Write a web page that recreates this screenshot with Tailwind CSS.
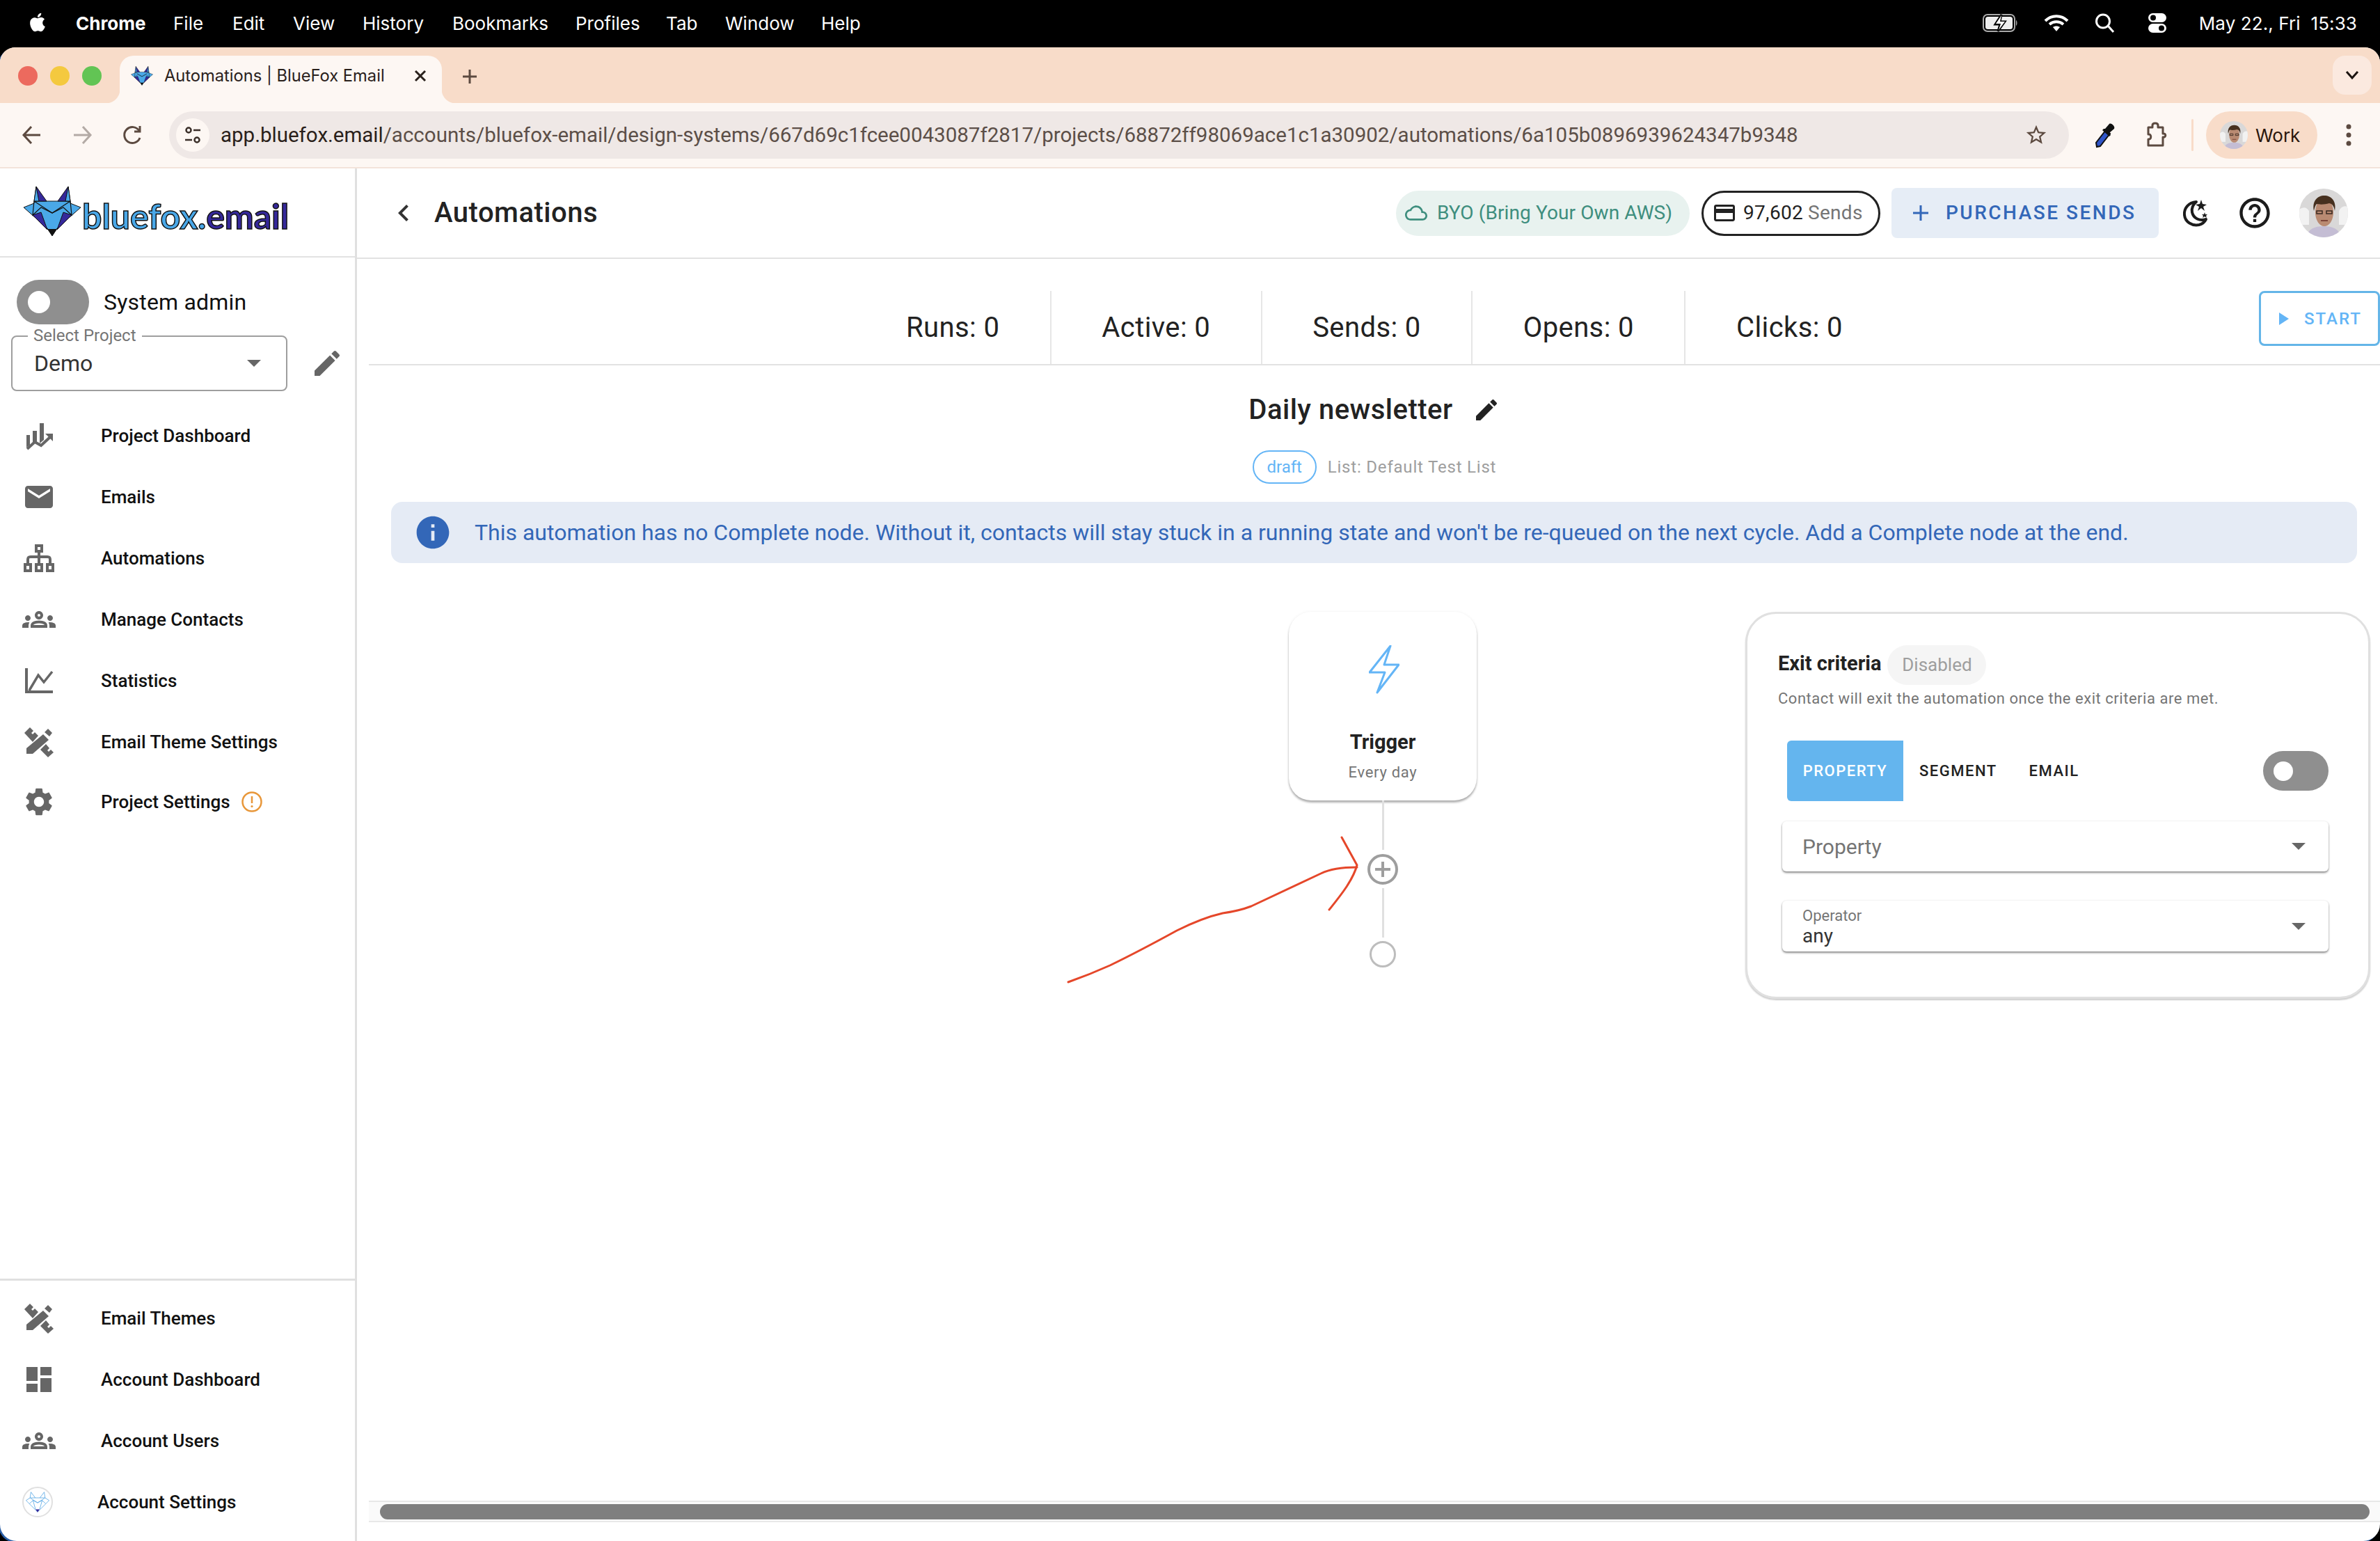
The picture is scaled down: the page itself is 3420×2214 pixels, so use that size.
<!DOCTYPE html>
<html lang="en">
<head>
  <meta charset="UTF-8" />
  <title>Automations | BlueFox Email</title>
  <script src="https://cdn.jsdelivr.net/npm/@tailwindcss/browser@4"></script>
</head>
<body class="w-[3420px] h-[2214px] overflow-hidden bg-black flex flex-col font-[Roboto,sans-serif]">

  <!-- shared fox logo -->
  <svg class="hidden">
    <symbol id="fox" viewBox="-1 -1 84 73">
      <polygon points="0,30 15,24 15,21 67,21 67,24 82,30 48,60 41,71 34,60" fill="#4aa8e8" stroke="#111" stroke-width="1"/>
      <polygon points="18,0 15,21 33,21" fill="#35289a" stroke="#111" stroke-width="1"/>
      <polygon points="18,0 15,21 22,21" fill="#4aa8e8" stroke="#111" stroke-width="1"/>
      <polygon points="64,0 67,21 49,21" fill="#35289a" stroke="#111" stroke-width="1"/>
      <polygon points="64,0 67,21 60,21" fill="#4aa8e8" stroke="#111" stroke-width="1"/>
      <polygon points="13,41 25,37 34,62" fill="#35289a" stroke="#111" stroke-width="1"/>
      <polygon points="69,41 57,37 48,62" fill="#35289a" stroke="#111" stroke-width="1"/>
      <polyline points="15,21 41,38 67,21" fill="none" stroke="#111" stroke-width="1.2"/>
      <polyline points="15,21 13,41 25,30 41,38 57,30 69,41 67,21" fill="none" stroke="#111" stroke-width="1.2"/>
      <polygon points="34,61 48,61 41,71" fill="#111"/>
    </symbol>
    <symbol id="design" viewBox="0 0 48 48">
      <polygon points="6,41 6,33 30,13 38,21 15,41"/>
      <polygon points="32,10 37,5 43,11 39,16"/>
      <polygon points="3,11 11,3 16,8 13,11 15,13 18,10 23,15 15,24"/>
      <polygon points="26,35 34,27 39,33 36,36 38,38 41,35 45,39 37,46"/>
    </symbol>
    <symbol id="groups" viewBox="0 0 24 24"><path d="M4,13c1.1,0,2-0.9,2-2c0-1.1-0.9-2-2-2s-2,0.9-2,2C2,12.1,2.9,13,4,13z M5.13,14.1C4.76,14.04,4.39,14,4,14 c-0.99,0-1.93,0.21-2.78,0.58C0.48,14.9,0,15.62,0,16.43V18l4.5,0v-1.61C4.5,15.56,4.73,14.78,5.13,14.1z M20,13c1.1,0,2-0.9,2-2 c0-1.1-0.9-2-2-2s-2,0.9-2,2C18,12.1,18.9,13,20,13z M24,16.43c0-0.81-0.48-1.53-1.22-1.85C21.93,14.21,20.99,14,20,14 c-0.39,0-0.76,0.04-1.13,0.1c0.4,0.68,0.63,1.46,0.63,2.29V18l4.5,0V16.43z M16.24,13.65c-1.17-0.52-2.61-0.9-4.24-0.9 c-1.63,0-3.07,0.39-4.24,0.9C6.68,14.13,6,15.21,6,16.39V18h12v-1.61C18,15.21,17.32,14.13,16.24,13.65z M8.07,16 c0.09-0.23,0.13-0.39,0.91-0.69c0.97-0.38,1.99-0.56,3.02-0.56s2.05,0.18,3.02,0.56c0.77,0.3,0.81,0.46,0.91,0.69H8.07z M12,8 c0.55,0,1,0.45,1,1s-0.45,1-1,1s-1-0.45-1-1S11.45,8,12,8 M12,6c-1.66,0-3,1.34-3,3c0,1.66,1.34,3,3,3s3-1.34,3-3 C15,7.34,13.66,6,12,6L12,6z"/></symbol>
    <symbol id="face" viewBox="0 0 70 70">
      <rect width="70" height="70" fill="#d9d8d8"/>
      <path d="M0 30c6-4 10-4 14 2v20H0zM70 26c-6-2-10 0-13 6v20h13z" fill="#f2f2f2"/>
      <path d="M10 70c2-12 12-16 25-16s23 4 25 16z" fill="#c4bdd4"/>
      <ellipse cx="36" cy="34" rx="13" ry="20" fill="#b98a72"/>
      <path d="M21 32c-3-14 5-22 15-22s18 8 15 22c-1-6-3-10-8-11-6 2-14 2-18 1-2 2-3 6-4 10z" fill="#46301f"/>
      <path d="M25 32h8v4h-8zM39 32h8v4h-8z" fill="none" stroke="#3a2a22" stroke-width="1.500"/>
      <path d="M31 46h10" stroke="#7c4438" stroke-width="2"/>
    </symbol>
  </svg>

  <!-- macOS menu bar -->
  <div class="h-[68px] shrink-0 flex items-center text-white text-[26px] font-[Inter,sans-serif] pb-[2px] relative">
    <svg class="w-[32px] h-[32px] ml-[38px] -mt-[2px]" viewBox="0 0 24 24" fill="#fff"><path d="M18.71 19.5c-.83 1.24-1.71 2.45-3.05 2.47-1.34.03-1.77-.79-3.29-.79-1.53 0-2 .77-3.27.82-1.31.05-2.3-1.32-3.14-2.53C4.25 17 2.94 12.45 4.7 9.39c.87-1.52 2.43-2.48 4.12-2.51 1.28-.02 2.5.87 3.29.87.78 0 2.26-1.07 3.81-.91.65.03 2.47.26 3.64 1.98-.09.06-2.17 1.28-2.15 3.81.03 3.02 2.65 4.03 2.68 4.04-.03.07-.42 1.44-1.38 2.83M13 3.5c.73-.83 1.94-1.46 2.94-1.5.13 1.17-.34 2.35-1.04 3.19-.69.85-1.83 1.51-2.95 1.42-.15-1.15.41-2.35 1.05-3.11z"/></svg>
    <span class="ml-[39px] w-[140px] font-bold">Chrome</span>
    <span class="w-[85px]">File</span>
    <span class="w-[87px]">Edit</span>
    <span class="w-[100px]">View</span>
    <span class="w-[129px]">History</span>
    <span class="w-[177px]">Bookmarks</span>
    <span class="w-[130px]">Profiles</span>
    <span class="w-[85px]">Tab</span>
    <span class="w-[138px]">Window</span>
    <span>Help</span>
    <div class="ml-auto flex items-center pr-[33px]">
      <svg class="w-[52px] h-[26px]" viewBox="0 0 52 26"><rect x="1" y="1" width="45" height="24" rx="6" fill="none" stroke="#aaa" stroke-width="2"/><rect x="4" y="4" width="39" height="18" rx="3.5" fill="#eee"/><path d="M48 9c2 1 2 7 0 8z" fill="#aaa"/><path d="M27 1l-9 14h7l-3 10 10-14h-7z" fill="#000" stroke="#000" stroke-width="3"/><path d="M27 2l-8 12h7l-3 9 9-12h-7z" fill="#fff"/></svg>
      <svg class="w-[36px] h-[26px] ml-[36px]" viewBox="0 0 36 26" fill="none" stroke="#fff" stroke-width="4"><path d="M2 10c9-9 23-9 32 0"/><path d="M8 15c6-5 14-5 20 0"/><path d="M18 25l-5-6c3-2 7-2 10 0z" fill="#fff" stroke="none"/></svg>
      <svg class="w-[30px] h-[28px] ml-[37px]" viewBox="0 0 30 28" fill="none" stroke="#fff" stroke-width="3"><circle cx="12" cy="11.500" r="9.500"/><path d="M19 18l8 9"/></svg>
      <svg class="w-[28px] h-[28px] ml-[46px]" viewBox="0 0 28 28"><rect x="1" y="0" width="26" height="13" rx="6.500" fill="#fff"/><circle cx="8" cy="6.500" r="4" fill="#000"/><rect x="1" y="15" width="26" height="13" rx="6.500" fill="#fff"/><circle cx="20" cy="21.500" r="4" fill="#000"/></svg>
      <span class="ml-[46px] tracking-[0.1px]">May 22., Fri&nbsp;&nbsp;15:33</span>
    </div>
  </div>

  <!-- browser window -->
  <div class="flex-1 min-h-0 flex flex-col rounded-t-[22px] rounded-b-[24px] overflow-hidden bg-white shadow-[-2px_2px_0_#2a5fa8]">

    <!-- tab strip -->
    <div class="h-[80px] shrink-0 bg-[#f8dcc9] flex items-end relative">
      <div class="flex gap-[18px] self-start mt-[27px] ml-[26px] mr-[26px]">
        <span class="w-[28px] h-[28px] rounded-full bg-[#ec6a5e]"></span>
        <span class="w-[28px] h-[28px] rounded-full bg-[#f4c93f]"></span>
        <span class="w-[28px] h-[28px] rounded-full bg-[#62c454]"></span>
      </div>
      <div class="w-[463px] h-[68px] bg-[#fdf7f3] rounded-t-[20px] flex items-center pl-[16px] pb-[10px] relative">
        <svg class="w-[32px] h-[30px]"><use href="#fox"/></svg>
        <span class="ml-[16px] text-[23.7px] text-[#2a211c] font-[Inter,sans-serif] whitespace-nowrap">Automations | BlueFox Email</span>
        <svg class="absolute left-[422px] top-[19px] w-[20px] h-[20px]" viewBox="0 0 20 20" stroke="#2a211c" stroke-width="3"><path d="M3 3l14 14M17 3L3 17"/></svg>
        <span class="absolute -left-[20px] bottom-0 w-[20px] h-[20px] bg-[radial-gradient(circle_at_0_0,#f8dcc9_20px,#fdf7f3_21px)]"></span>
        <span class="absolute -right-[20px] bottom-0 w-[20px] h-[20px] bg-[radial-gradient(circle_at_100%_0,#f8dcc9_20px,#fdf7f3_21px)]"></span>
      </div>
      <svg class="w-[24px] h-[24px] ml-[28px] self-center mt-[4px]" viewBox="0 0 24 24" stroke="#5c4a40" stroke-width="3"><path d="M12 2v20M2 12h20"/></svg>
      <div class="ml-auto mr-[12px] self-start mt-[12px] w-[56px] h-[56px] rounded-[18px] bg-[#fbe9df] flex items-center justify-center">
        <svg class="w-[20px] h-[14px]" viewBox="0 0 20 14" fill="none" stroke="#1c1410" stroke-width="3"><path d="M2 2l8 9 8-9"/></svg>
      </div>
    </div>

    <!-- toolbar -->
    <div class="h-[94px] shrink-0 bg-[#fdf7f3] border-b-2 border-[#f3e3da] flex items-center">
      <svg class="w-[32px] h-[32px] ml-[30px]" viewBox="0 0 32 32" fill="none" stroke="#5c4a40" stroke-width="3"><path d="M28 16H5M15 4L4 16l11 12"/></svg>
      <svg class="w-[32px] h-[32px] ml-[40px]" viewBox="0 0 32 32" fill="none" stroke="#b3aaa5" stroke-width="3"><path d="M4 16h23M17 4l11 12-11 12"/></svg>
      <svg class="w-[32px] h-[32px] ml-[41px]" viewBox="0 0 32 32" fill="none" stroke="#5c4a40" stroke-width="3"><path d="M26 20a11.500 11.500 0 1 1-1-10"/><path d="M26 3v8h-8"/></svg>
      <div class="ml-[36px] flex-1 h-[68px] rounded-full bg-[#efe8e6] flex items-center">
        <span class="ml-[10px] w-[48px] h-[48px] rounded-full bg-[#fdf7f3] flex items-center justify-center">
          <svg class="w-[26px] h-[26px]" viewBox="0 0 26 26" fill="none" stroke="#3a2e28" stroke-width="2.500"><circle cx="7" cy="6" r="3.500"/><path d="M14 6h10M2 20h10"/><circle cx="19" cy="20" r="3.500"/></svg>
        </span>
        <span class="ml-[16px] text-[29.5px] text-[#5c4f48] font-[&quot;Liberation_Sans&quot;,sans-serif] whitespace-nowrap"><span class="text-[#2a1f1a]">app.bluefox.email</span>/accounts/bluefox-email/design-systems/667d69c1fcee0043087f2817/projects/68872ff98069ace1c1a30902/automations/6a105b0896939624347b9348</span>
        <svg class="ml-auto mr-[30px] w-[34px] h-[34px]" viewBox="0 0 24 24" fill="#5c4a40"><path d="M22 9.240l-7.190-.62L12 2 9.190 8.630 2 9.240l5.460 4.730L5.820 21 12 17.270 18.180 21l-1.630-7.030L22 9.240zM12 15.400l-3.760 2.270 1-4.280-3.320-2.880 4.380-.38L12 6.100l1.710 4.040 4.380.38-3.320 2.880 1 4.280L12 15.400z"/></svg>
      </div>
      <svg class="ml-[36px] w-[34px] h-[38px]" viewBox="0 0 34 38"><path d="M4 36l-1-6L17 12l6 5L9 35z" fill="#2f55c8" stroke="#111" stroke-width="2"/><path d="M16 10l6-7c3-2 9 4 7 7l-7 6 2 3-2 2-10-9 2-2z" fill="#111"/></svg>
      <svg class="ml-[38px] w-[34px] h-[38px]" viewBox="0 0 34 38" fill="none" stroke="#5c4a40" stroke-width="3"><path d="M6 8h6V5c0-4 8-4 8 0v3h7v9c5-1 5 6 0 5v12H6v-9c5 1 5-8 0-7z" stroke-linejoin="round"/></svg>
      <span class="ml-[34px] w-[3px] h-[46px] bg-[#f8dcc9] rounded"></span>
      <div class="ml-[18px] w-[160px] h-[68px] rounded-full bg-[#f8dcc9] flex items-center pl-[20px]">
        <svg class="w-[40px] h-[40px] rounded-full"><use href="#face"/></svg>
        <span class="ml-[11px] text-[26px] text-[#2a160c] font-[Inter,sans-serif]">Work</span>
      </div>
      <svg class="ml-[41px] mr-[41px] w-[8px] h-[32px]" viewBox="0 0 8 32" fill="#5c4a40"><circle cx="4" cy="4" r="3.500"/><circle cx="4" cy="16" r="3.500"/><circle cx="4" cy="28" r="3.500"/></svg>
    </div>

    <!-- app -->
    <div class="flex-1 min-h-0 flex">

      <!-- sidebar -->
      <aside class="w-[513px] shrink-0 border-r-[3px] border-[#e0e0e0] flex flex-col text-[#111]">
        <div class="h-[128px] shrink-0 border-b-2 border-[#e2e2e2] flex items-center pl-[33px] pb-[4px]">
          <svg class="w-[84px] h-[73px]"><use href="#fox"/></svg>
          <span class="ml-[1px] mt-[14px] text-[50px] leading-none font-bold font-[Lato,sans-serif] text-[#4aa8e8] [-webkit-text-stroke:1.5px_#111] whitespace-nowrap">bluefox.<span class="text-[#35289a]">email</span></span>
        </div>

        <div class="flex items-center ml-[24px] mt-[32px]">
          <span class="w-[104px] h-[64px] rounded-full bg-[#8f8f8f] flex items-center pl-[16px]"><span class="w-[32px] h-[32px] rounded-full bg-white"></span></span>
          <span class="ml-[21px] text-[32px] leading-none tracking-[0.2px]">System admin</span>
        </div>

        <div class="flex items-center ml-[16px] mt-[16px]">
          <div class="relative w-[397px] h-[80px] border-2 border-[#9e9e9e] rounded-[8px] flex items-center pl-[31px] pr-[36px]">
            <span class="absolute left-[22px] -top-[16px] px-[8px] bg-white text-[24px] leading-[28px] text-[#757575]">Select Project</span>
            <span class="text-[32px] text-[#333]">Demo</span>
            <span class="ml-auto w-0 h-0 border-x-[10px] border-x-transparent border-t-[10px] border-t-[#666]"></span>
          </div>
          <svg class="ml-[33px] w-[48px] h-[48px]" viewBox="0 0 24 24" fill="#666"><path d="M3 17.250V21h3.750L17.810 9.940l-3.750-3.750L3 17.250zM20.710 7.040c.39-.39.39-1.020 0-1.410l-2.340-2.340c-.39-.39-1.020-.39-1.410 0l-1.830 1.830 3.750 3.750 1.830-1.830z"/></svg>
        </div>

        <nav class="mt-[20px] text-[26px] font-medium">
          <a class="h-[88px] flex items-center pl-[32px] gap-[65px]">
            <svg class="w-[48px] h-[48px]" viewBox="0 0 48 48" fill="#666"><path d="M6 23h5v14l-5 4zM15 17h6v17l-6 0zM25 6h6v24l-6 5z"/><path d="M7 43l11-10 9 5 13-12" fill="none" stroke="#666" stroke-width="4"/><path d="M33 21h11v11z"/></svg>
            Project Dashboard</a>
          <a class="h-[88px] flex items-center pl-[32px] gap-[65px]">
            <svg class="w-[48px] h-[48px]" viewBox="0 0 24 24" fill="#666"><path d="M20 4H4c-1.100 0-1.990.9-1.990 2L2 18c0 1.100.9 2 2 2h16c1.100 0 2-.9 2-2V6c0-1.100-.9-2-2-2zm0 4l-8 5-8-5V6l8 5 8-5v2z"/></svg>
            Emails</a>
          <a class="h-[88px] flex items-center pl-[32px] gap-[65px]">
            <svg class="w-[48px] h-[48px]" viewBox="0 0 48 48" fill="none" stroke="#666" stroke-width="4"><rect x="20" y="6" width="8" height="8"/><rect x="4" y="33" width="8" height="9"/><rect x="20" y="33" width="8" height="9"/><rect x="36" y="33" width="8" height="9"/><path d="M24 16v15M8 31v-5c0-3 1-4 4-4h24c3 0 4 1 4 4v5"/></svg>
            Automations</a>
          <a class="h-[88px] flex items-center pl-[32px] gap-[65px]">
            <svg class="w-[48px] h-[48px]" fill="#666"><use href="#groups"/></svg>
            Manage Contacts</a>
          <a class="h-[88px] flex items-center pl-[32px] gap-[65px]">
            <svg class="w-[48px] h-[48px]" viewBox="0 0 48 48" fill="none" stroke="#666" stroke-width="4"><path d="M6 6v34h38"/><path d="M10 38l13-22 8 10 12-15" stroke-width="3.500"/></svg>
            Statistics</a>
          <a class="h-[88px] flex items-center pl-[32px] gap-[65px]">
            <svg class="w-[48px] h-[48px]" fill="#666"><use href="#design"/></svg>
            Email Theme Settings</a>
          <a class="h-[88px] -mt-[2px] flex items-center pl-[32px] gap-[65px]">
            <svg class="w-[48px] h-[48px]" viewBox="0 0 24 24" fill="#666"><path d="M19.140 12.940c.04-.3.06-.61.06-.94 0-.32-.02-.64-.07-.94l2.030-1.580c.18-.14.23-.41.12-.61l-1.920-3.320c-.12-.22-.37-.29-.59-.22l-2.390.96c-.5-.38-1.030-.7-1.620-.94l-.36-2.540c-.04-.24-.24-.41-.48-.41h-3.840c-.24 0-.43.17-.47.41l-.36 2.540c-.59.24-1.130.57-1.620.94l-2.390-.96c-.22-.08-.47 0-.59.22L2.740 8.870c-.12.21-.08.47.12.61l2.030 1.580c-.05.3-.09.63-.09.94s.02.64.07.94l-2.030 1.580c-.18.14-.23.41-.12.61l1.920 3.320c.12.22.37.29.59.22l2.390-.96c.5.38 1.030.7 1.620.94l.36 2.540c.05.24.24.41.48.41h3.840c.24 0 .44-.17.47-.41l.36-2.540c.59-.24 1.130-.56 1.620-.94l2.390.96c.22.08.47 0 .59-.22l1.920-3.320c.12-.22.07-.47-.12-.61l-2.010-1.580zM12 15.600c-1.980 0-3.600-1.620-3.600-3.600s1.620-3.600 3.600-3.600 3.600 1.620 3.600 3.600-1.620 3.600-3.600 3.600z"/></svg>
            <span class="flex items-center">Project Settings
              <svg class="ml-[16px] w-[30px] h-[30px]" viewBox="0 0 30 30"><circle cx="15" cy="15" r="13.500" fill="none" stroke="#e8973a" stroke-width="2.500"/><path d="M15 7v10" stroke="#e8973a" stroke-width="2.500"/><circle cx="15" cy="21.500" r="1.600" fill="#e8973a"/></svg>
            </span></a>
        </nav>

        <nav class="mt-auto border-t-[3px] border-[#e0e0e0] pt-[10px] pb-[12px] text-[26px] font-medium">
          <a class="h-[88px] flex items-center pl-[32px] gap-[65px]">
            <svg class="w-[48px] h-[48px]" fill="#666"><use href="#design"/></svg>
            Email Themes</a>
          <a class="h-[88px] flex items-center pl-[32px] gap-[65px]">
            <svg class="w-[48px] h-[48px]" viewBox="0 0 24 24" fill="#666"><path d="M3 13h8V3H3v10zm0 8h8v-6H3v6zm10 0h8V11h-8v10zm0-18v6h8V3h-8z"/></svg>
            Account Dashboard</a>
          <a class="h-[88px] flex items-center pl-[32px] gap-[65px]">
            <svg class="w-[48px] h-[48px]" fill="#666"><use href="#groups"/></svg>
            Account Users</a>
          <a class="h-[88px] flex items-center pl-[32px] gap-[64px]">
            <span class="w-[44px] h-[44px] rounded-full border-2 border-[#e0e0e0] flex items-center justify-center">
              <svg class="w-[34px] h-[30px]" viewBox="0 0 82 71" fill="none" stroke="#5aa9e6" stroke-width="2"><path d="M18 1L15 21h52L64 1 49 21M18 1l15 20M15 21L1 30l40 40 40-40-14-9M15 21l26 17 26-17M13 41l12-11 16 8 16-8 12 11M25 30l9 31M57 30l-9 31"/><polygon points="34,61 48,61 41,71" fill="#35289a" stroke="none"/></svg>
            </span>
            Account Settings</a>
        </nav>
      </aside>

      <!-- main -->
      <main class="flex-1 min-w-0 flex flex-col">
        <header class="h-[130px] shrink-0 border-b-2 border-[#e2e2e2] flex items-center pr-[46px]">
          <svg class="ml-[43px] w-[48px] h-[48px]" viewBox="0 0 24 24" fill="#333"><path d="M15.410 7.410 14 6l-6 6 6 6 1.410-1.410L10.830 12z"/></svg>
          <h1 class="ml-[20px] text-[40px] font-medium tracking-[0.5px] text-[#222]">Automations</h1>
          <div class="ml-auto w-[422px] h-[65px] rounded-full bg-[#e8f2ef] flex items-center pl-[13px] text-[28px] tracking-[0.1px] text-[#3e8e7e] whitespace-nowrap">
            <svg class="w-[32px] h-[32px]" viewBox="0 0 24 24" fill="#3e8e7e"><path d="M19.350 10.040C18.670 6.590 15.640 4 12 4 9.110 4 6.600 5.640 5.350 8.040 2.340 8.360 0 10.910 0 14c0 3.310 2.690 6 6 6h13c2.760 0 5-2.240 5-5 0-2.640-2.050-4.780-4.650-4.960zM19 18H6c-2.210 0-4-1.790-4-4s1.790-4 4-4h.71C7.370 7.690 9.480 6 12 6c3.040 0 5.500 2.460 5.500 5.500v.5H19c1.660 0 3 1.340 3 3s-1.340 3-3 3z"/></svg>
            <span class="ml-[14px]">BYO (Bring Your Own AWS)</span>
          </div>
          <div class="ml-[17px] w-[257px] h-[65px] rounded-full border-[3px] border-[#222] flex items-center pl-[12px] text-[28px] tracking-[0.3px] whitespace-nowrap">
            <svg class="w-[36px] h-[36px]" viewBox="0 0 24 24" fill="#222"><path d="M20 4H4c-1.110 0-1.990.89-1.990 2L2 18c0 1.110.89 2 2 2h16c1.110 0 2-.89 2-2V6c0-1.110-.89-2-2-2zm0 14H4v-6h16v6zm0-10H4V6h16v2z"/></svg>
            <span class="ml-[9px] text-[#222]">97,602</span><span class="ml-[7px] text-[#757575]">Sends</span>
          </div>
          <div class="ml-[16px] w-[384px] h-[72px] rounded-[8px] bg-[#e6edf6] flex items-center pl-[30px] text-[28px] font-medium tracking-[2.5px] text-[#3367b8] whitespace-nowrap">
            <svg class="w-[24px] h-[24px]" viewBox="0 0 24 24" stroke="#3367b8" stroke-width="3"><path d="M12 1v22M1 12h22"/></svg>
            <span class="ml-[24px]">PURCHASE SENDS</span>
          </div>
          <svg class="ml-[28px] w-[48px] h-[48px]" viewBox="0 0 48 48"><path d="M26 8C15 9 8 17 9 27c1 10 11 16 21 14 4-1 8-4 10-8-9 3-18-1-20-10-1-6 1-11 6-15z" fill="none" stroke="#1c1c1c" stroke-width="4" stroke-linejoin="round"/><path d="M33 5l2 6 6 1-5 3 2 6-5-4-5 4 2-6-5-3 6-1z" fill="#1c1c1c"/><path d="M38 23l1 3h3l-2 2 1 3-3-2-3 2 1-3-2-2h3z" fill="#1c1c1c"/></svg>
          <svg class="ml-[36px] mr-[38px] w-[52px] h-[52px]" viewBox="0 0 24 24" fill="#1c1c1c"><path d="M11 18h2v-2h-2v2zm1-16C6.480 2 2 6.480 2 12s4.480 10 10 10 10-4.480 10-10S17.520 2 12 2zm0 18c-4.410 0-8-3.590-8-8s3.590-8 8-8 8 3.590 8 8-3.590 8-8 8zm0-14c-2.210 0-4 1.790-4 4h2c0-1.100.9-2 2-2s2 .9 2 2c0 2-3 1.750-3 5h2c0-2.250 3-2.500 3-5 0-2.210-1.790-4-4-4z"/></svg>
          <svg class="w-[70px] h-[70px] rounded-full"><use href="#face"/></svg>
        </header>

        <div class="flex-1 min-h-0 ml-[17px] flex flex-col">
          <!-- stats -->
          <div class="relative h-[153px] shrink-0 border-b-2 border-[#e2e2e2] flex justify-center items-end text-[40px] tracking-[0.4px] text-[#222]">
            <span class="h-[105px] flex items-center px-[72.5px] border-r-2 border-[#e6e6e6]">Runs: 0</span>
            <span class="h-[105px] flex items-center px-[72.5px] border-r-2 border-[#e6e6e6]">Active: 0</span>
            <span class="h-[105px] flex items-center px-[72.5px] border-r-2 border-[#e6e6e6]">Sends: 0</span>
            <span class="h-[105px] flex items-center px-[72.5px] border-r-2 border-[#e6e6e6]">Opens: 0</span>
            <span class="h-[105px] flex items-center px-[72.5px]">Clicks: 0</span>
            <button class="absolute right-0 top-[46px] w-[174px] h-[79px] rounded-[8px] border-[3px] border-[#64b5e8] flex items-center pl-[26px] text-[24px] tracking-[2px] text-[#64b5f6] font-medium">
              <svg class="w-[14px] h-[18px]" viewBox="0 0 14 18" fill="#64b5f6"><path d="M0 0l14 9-14 9z"/></svg>
              <span class="ml-[22px]">START</span>
            </button>
          </div>

          <!-- title -->
          <div class="mt-[40px] flex justify-center items-center h-[48px]">
            <h2 class="text-[40px] font-medium tracking-[0.5px] text-[#222]">Daily newsletter</h2>
            <svg class="ml-[28px] w-[40px] h-[40px]" viewBox="0 0 24 24" fill="#222"><path d="M3 17.250V21h3.750L17.810 9.940l-3.750-3.750L3 17.250zM20.710 7.040c.39-.39.39-1.020 0-1.410l-2.340-2.340c-.39-.39-1.020-.39-1.410 0l-1.830 1.830 3.750 3.750 1.830-1.830z"/></svg>
          </div>
          <div class="mt-[34px] flex justify-center items-center gap-[16px] text-[24px]">
            <span class="w-[92px] h-[48px] rounded-full border-2 border-[#64b5f6] text-[#64b5f6] flex items-center justify-center">draft</span>
            <span class="text-[#9e9e9e] tracking-[0.8px]">List: Default Test List</span>
          </div>

          <!-- alert -->
          <div class="mt-[26px] ml-[32px] mr-[33px] h-[88px] shrink-0 rounded-[16px] bg-[#e5ebf5] flex items-center pl-[32px] text-[32px] text-[#3367b8] whitespace-nowrap">
            <svg class="w-[56px] h-[56px]" viewBox="0 0 24 24" fill="#3367b8"><path d="M12 2C6.480 2 2 6.480 2 12s4.480 10 10 10 10-4.480 10-10S17.520 2 12 2zm1 15h-2v-6h2v6zm0-8h-2V7h2v2z"/></svg>
            <span class="ml-[32px] -mt-[1px]">This automation has no Complete node. Without it, contacts will stay stuck in a running state and won't be re-queued on the next cycle. Add a Complete node at the end.</span>
          </div>

          <!-- canvas -->
          <div class="relative flex-1 min-h-0">
            <!-- trigger column -->
            <div class="absolute left-[1322px] top-[70px] w-[270px] flex flex-col items-center">
              <div class="w-[270px] h-[271px] rounded-[32px] bg-white shadow-[0_3px_3px_rgba(0,0,0,0.3),0_0_4px_rgba(0,0,0,0.06)] flex flex-col items-center">
                <svg class="mt-[48px] ml-[3px] w-[44px] h-[70px]" viewBox="0 0 44 70" fill="none" stroke="#64b5f6" stroke-width="3" stroke-linejoin="round"><path d="M31 1L1 39h22l-11 29 31-40H22z"/></svg>
                <span class="mt-[51px] text-[29px] font-bold text-[#222] leading-[36px]">Trigger</span>
                <span class="mt-[12px] text-[22px] text-[#757575] tracking-[0.7px] leading-[28px]">Every day</span>
              </div>
              <span class="w-[3px] h-[71px] bg-[#e0e0e0]"></span>
              <span class="mt-[6px] w-[44px] h-[44px] rounded-full border-[4px] border-[#9e9e9e] flex items-center justify-center">
                <svg class="w-[24px] h-[24px]" viewBox="0 0 24 24" stroke="#9e9e9e" stroke-width="4"><path d="M12 1v22M1 12h22"/></svg>
              </span>
              <span class="mt-[5px] w-[3px] h-[71px] bg-[#e0e0e0]"></span>
              <span class="mt-[5px] w-[38px] h-[38px] rounded-full border-[3px] border-[#bdbdbd]"></span>
            </div>

            <!-- hand drawn arrow -->
            <svg class="absolute left-[980px] top-[378px] w-[450px] h-[240px]" viewBox="1510 1188 450 240" fill="none" stroke="#e5472a" stroke-width="3" stroke-linecap="round" stroke-linejoin="round">
              <path d="M1535 1412c20-7 40-15 60-24 33-16 65-33 96-50 22-11 44-20 66-25 15-2 28-5 41-10l100-47c14-7 32-9 52-9"/>
              <path d="M1928 1204l22 40c-6 22-24 44-40 64"/>
            </svg>

            <!-- exit criteria -->
            <div class="absolute left-[1978px] top-[70px] w-[898px] h-[556px] rounded-[44px] border-[3px] border-[#e0e0e0] bg-white shadow-[0_2px_2px_rgba(0,0,0,0.2)] pl-[44px] pr-[57px] pt-[45px]">
              <div class="flex items-center">
                <span class="-mt-[3px] text-[29px] font-bold text-[#222]">Exit criteria</span>
                <span class="ml-[9px] w-[142px] h-[57px] rounded-full bg-[#f5f5f5] text-[26px] text-[#9e9e9e] flex items-center justify-center">Disabled</span>
              </div>
              <p class="mt-[6px] text-[22px] leading-[28px] tracking-[0.53px] text-[#757575] whitespace-nowrap">Contact will exit the automation once the exit criteria are met.</p>
              <div class="mt-[46px] ml-[13px] h-[87px] flex items-center text-[22px] font-medium tracking-[1.5px] text-[#222]">
                <span class="h-full w-[167px] rounded-l-[6px] bg-[#64b5ee] text-white flex items-center justify-center">PROPERTY</span>
                <span class="px-[23px]">SEGMENT</span>
                <span class="px-[23px]">EMAIL</span>
                <span class="ml-auto w-[94px] h-[57px] rounded-full bg-[#8f8f8f] flex items-center pl-[15px]"><span class="w-[28px] h-[28px] rounded-full bg-white"></span></span>
              </div>
              <div class="mt-[29px] ml-[6px] h-[72px] rounded-[6px] bg-white shadow-[0_2px_3px_rgba(0,0,0,0.45),0_0_3px_rgba(0,0,0,0.08)] flex items-center pl-[29px] pr-[33px] text-[30px] text-[#757575]">
                Property
                <span class="ml-auto w-0 h-0 border-x-[10px] border-x-transparent border-t-[10px] border-t-[#666]"></span>
              </div>
              <div class="mt-[42px] ml-[6px] h-[73px] rounded-[6px] bg-white shadow-[0_2px_3px_rgba(0,0,0,0.45),0_0_3px_rgba(0,0,0,0.08)] flex items-center pl-[29px] pr-[33px]">
                <div class="flex flex-col mt-[2px]">
                  <span class="text-[22px] leading-[26px] text-[#757575]">Operator</span>
                  <span class="text-[28px] leading-[32px] text-[#333]">any</span>
                </div>
                <span class="ml-auto w-0 h-0 border-x-[10px] border-x-transparent border-t-[10px] border-t-[#666]"></span>
              </div>
            </div>
          </div>

          <!-- horizontal scrollbar -->
          <div class="h-[31px] mb-[27px] shrink-0 bg-[#fafafa] border-t-2 border-b-2 border-[#e8e8e8] flex items-center pl-[16px] pr-[15px]">
            <span class="flex-1 h-[22px] rounded-full bg-[#7f7f7f]"></span>
          </div>
        </div>
      </main>
    </div>
  </div>
</body>
</html>
